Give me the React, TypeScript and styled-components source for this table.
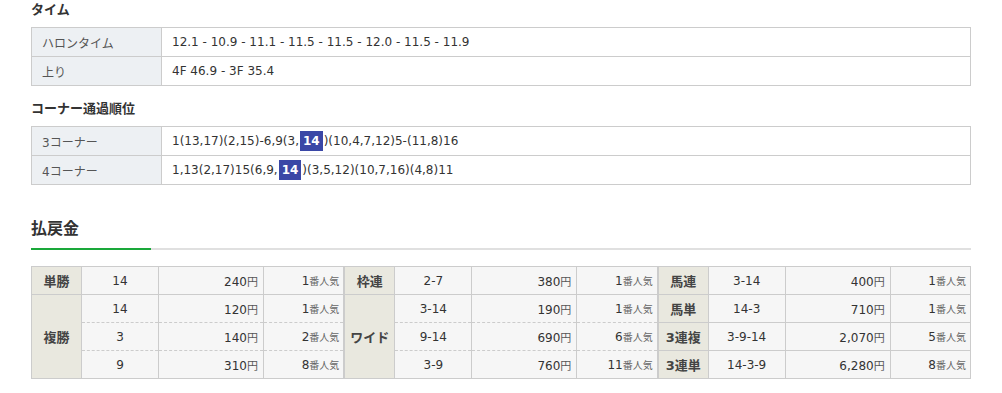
import { FC, Fragment } from "react";
import styled, { createGlobalStyle } from "styled-components";

const GlobalStyle = createGlobalStyle`
  body {
    margin: 0;
    background: #fff;
    font-family: "DejaVu Sans", "Noto Sans CJK JP", sans-serif;
    color: #333;
  }
`;

type PayoutRow = { combo: string; amount: string; rank: number };
type PayoutGroup = { type: string; rows: PayoutRow[] };

const furlongs = "12.1 - 10.9 - 11.1 - 11.5 - 11.5 - 12.0 - 11.5 - 11.9";
const agari = "4F 46.9 - 3F 35.4";

const corners = [
  { label: "3コーナー", before: "1(13,17)(2,15)-6,9(3,", after: ")(10,4,7,12)5-(11,8)16" },
  { label: "4コーナー", before: "1,13(2,17)15(6,9,", after: ")(3,5,12)(10,7,16)(4,8)11" },
];

const payouts: PayoutGroup[][] = [
  [
    { type: "単勝", rows: [{ combo: "14", amount: "240", rank: 1 }] },
    {
      type: "複勝",
      rows: [
        { combo: "14", amount: "120", rank: 1 },
        { combo: "3", amount: "140", rank: 2 },
        { combo: "9", amount: "310", rank: 8 },
      ],
    },
  ],
  [
    { type: "枠連", rows: [{ combo: "2-7", amount: "380", rank: 1 }] },
    {
      type: "ワイド",
      rows: [
        { combo: "3-14", amount: "190", rank: 1 },
        { combo: "9-14", amount: "690", rank: 6 },
        { combo: "3-9", amount: "760", rank: 11 },
      ],
    },
  ],
  [
    { type: "馬連", rows: [{ combo: "3-14", amount: "400", rank: 1 }] },
    { type: "馬単", rows: [{ combo: "14-3", amount: "710", rank: 1 }] },
    { type: "3連複", rows: [{ combo: "3-9-14", amount: "2,070", rank: 5 }] },
    { type: "3連単", rows: [{ combo: "14-3-9", amount: "6,280", rank: 8 }] },
  ],
];

const App: FC = () => {
  return (
    <Page>
      <GlobalStyle />
      <SubHeading>タイム</SubHeading>
      <InfoTable>
        <tbody>
          <tr>
            <LabelCell>ハロンタイム</LabelCell>
            <DataCell>{furlongs}</DataCell>
          </tr>
          <tr>
            <LabelCell>上り</LabelCell>
            <DataCell>{agari}</DataCell>
          </tr>
        </tbody>
      </InfoTable>

      <SubHeading $top={13}>コーナー通過順位</SubHeading>
      <InfoTable>
        <tbody>
          {corners.map((c) => (
            <tr key={c.label}>
              <LabelCell>{c.label}</LabelCell>
              <DataCell>
                {c.before}
                <HorseBadge>14</HorseBadge>
                {c.after}
              </DataCell>
            </tr>
          ))}
        </tbody>
      </InfoTable>

      <PayoutHeading>払戻金</PayoutHeading>
      <PayoutWrap>
        {payouts.map((groups, i) => (
          <PayoutTable key={i}>
            <colgroup>
              <col style={{ width: 50 }} />
              <col style={{ width: 77 }} />
              <col style={{ width: 105 }} />
              <col />
            </colgroup>
            <tbody>
              {groups.map((g) => (
                <Fragment key={g.type}>
                  {g.rows.map((r, j) => (
                    <tr key={j}>
                      {j === 0 && (
                        <TypeCell rowSpan={g.rows.length}>{g.type}</TypeCell>
                      )}
                      <ComboCell $dashed={j > 0}>{r.combo}</ComboCell>
                      <AmountCell $dashed={j > 0}>
                        {r.amount}
                        <Unit>円</Unit>
                      </AmountCell>
                      <RankCell $dashed={j > 0}>
                        {r.rank}
                        <RankUnit>番人気</RankUnit>
                      </RankCell>
                    </tr>
                  ))}
                </Fragment>
              ))}
            </tbody>
          </PayoutTable>
        ))}
      </PayoutWrap>
    </Page>
  );
};

export default App;

const Page = styled.div`
  padding: 0 31px;
  width: 940px;
`;

const SubHeading = styled.h3<{ $top?: number }>`
  margin: ${({ $top }) => $top ?? 0}px 0 7px;
  font-size: 13px;
  line-height: 20px;
  font-weight: bold;
  color: #333;
`;

const InfoTable = styled.table`
  width: 100%;
  border-collapse: collapse;
  font-size: 12px;
  td {
    border: 1px solid #ccc;
    height: 28px;
    padding: 0 10px;
    box-sizing: content-box;
  }
`;

const LabelCell = styled.td`
  width: 109px;
  background: #edf0f3;
  color: #555;
`;

const DataCell = styled.td`
  background: #fff;
  color: #333;
`;

const HorseBadge = styled.span`
  display: inline-block;
  background: #3a47a6;
  color: #fff;
  font-weight: bold;
  font-size: 12px;
  line-height: 20px;
  padding: 0 3px;
  margin: 0 1px;
`;

const PayoutHeading = styled.h2`
  position: relative;
  margin: 32px 0 16px;
  padding-bottom: 7px;
  font-size: 16px;
  line-height: 24px;
  font-weight: bold;
  color: #333;
  border-bottom: 2px solid #e0e0e0;
  &::after {
    content: "";
    position: absolute;
    left: 0;
    bottom: -2px;
    width: 120px;
    height: 2px;
    background: #1aa83a;
  }
`;

const PayoutWrap = styled.div`
  display: flex;
`;

const PayoutTable = styled.table`
  flex: 1 1 0;
  table-layout: fixed;
  border-collapse: collapse;
  border-bottom: 1px solid #ccc;
  font-size: 12px;
  color: #333;
`;

const TypeCell = styled.td`
  background: #e9e8df;
  border: 1px solid #ccc;
  height: 27px;
  padding: 0;
  text-align: center;
  font-weight: bold;
  font-size: 13px;
  color: #444;
`;

const Cell = styled.td<{ $dashed?: boolean }>`
  background: #f6f6f6;
  border-left: 1px solid #ccc;
  border-right: 1px solid #ccc;
  border-top: 1px ${({ $dashed }) => ($dashed ? "dashed" : "solid")} #ccc;
  border-bottom: none;
  height: 27px;
  padding: 0;
  white-space: nowrap;
`;

const ComboCell = styled(Cell)`
  text-align: center;
`;

const AmountCell = styled(Cell)`
  text-align: right;
  padding-right: 5px;
`;

const RankCell = styled(Cell)`
  text-align: right;
  padding-right: 4px;
`;

const Unit = styled.span`
  font-size: 11px;
  color: #555;
`;

const RankUnit = styled.span`
  font-size: 10px;
  color: #666;
`;
